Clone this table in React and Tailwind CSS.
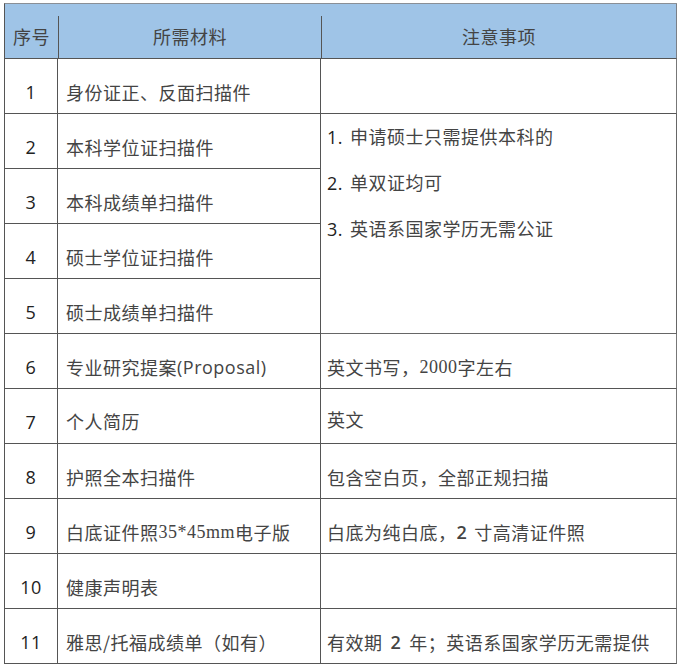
import React from 'react';

const cjk = "font-['Noto_Sans_CJK_SC',sans-serif]";
const num = "font-['Open_Sans','Noto_Sans_CJK_SC',sans-serif]";
const serif = "font-['Liberation_Serif',serif]";

// one row per material; note === undefined means the cell is covered by the merged block
const rows = [
    { no: '1', item: '身份证正、反面扫描件', note: '' },
    { no: '2', item: '本科学位证扫描件' },
    { no: '3', item: '本科成绩单扫描件' },
    { no: '4', item: '硕士学位证扫描件' },
    { no: '5', item: '硕士成绩单扫描件' },
    {
        no: '6',
        item: <>专业研究提案<span className={num}>(Proposal)</span></>,
        note: <>英文书写，<span className={serif}>2000</span>字左右</>,
    },
    { no: '7', item: '个人简历', note: '英文', itemPad: 'pt-[10px]', notePad: 'pt-[6px]' },
    { no: '8', item: '护照全本扫描件', note: '包含空白页，全部正规扫描' },
    {
        no: '9',
        item: <>白底证件照<span className={serif}>35*45mm</span>电子版</>,
        note: <>白底为纯白底，<span className={`${num} font-semibold mr-[7px]`}>2</span>寸高清证件照</>,
    },
    { no: '10', item: '健康声明表', note: '' },
    {
        no: '11',
        item: '雅思/托福成绩单（如有）',
        note: <>有效期<span className={`${num} font-semibold mx-[8px]`}>2</span>年；英语系国家学历无需提供</>,
    },
];

const merged = ['申请硕士只需提供本科的', '单双证均可', '英语系国家学历无需公证'];

export default function App() {
    return (
        <div className="bg-white w-[685px] h-[668px] pt-[3px] pl-[4px]">
            <div
                className={`grid grid-cols-[53px_263px_356px] grid-rows-[55px_repeat(11,55px)] w-[673px] border-l border-t border-l-[#555] border-t-[#8a8f96] text-[18px] tracking-[0.5px] text-[#444] ${cjk}`}
            >
                {/* header */}
                <div className="bg-[#9fc4e7] border-b border-[#555] flex justify-center items-center pt-[10px]">序号</div>
                <div className="bg-[#9fc4e7] border-b border-[#555] flex flex-col">
                    <div className="mt-[12px] flex-1 border-l border-[#555] flex justify-center items-center pb-[2px]">所需材料</div>
                </div>
                <div className="bg-[#9fc4e7] border-b border-r border-[#555] border-r-[#7a7f86] flex flex-col">
                    <div className="mt-[12px] flex-1 border-l border-[#555] flex justify-center items-center pb-[2px]">注意事项</div>
                </div>

                {rows.map((r, i) => (
                    <React.Fragment key={r.no}>
                        <div className={`border-r border-b border-[#555] flex justify-center items-center pt-[12px] text-[18px] font-medium text-[#222] ${num}`}>
                            {r.no}
                        </div>
                        <div className={`border-r border-b border-[#555] flex items-center pl-[8px] whitespace-nowrap ${r.itemPad || 'pt-[12px]'}`}>
                            {r.item}
                        </div>
                        {i === 1 && (
                            <div className="row-span-4 border-r border-b border-[#666] pl-[6px] leading-[45px] flex flex-col">
                                {merged.map((m, k) => (
                                    <div key={k} className="whitespace-nowrap">
                                        <span className={`${num} font-medium text-[#222] mr-[7px]`}>{k + 1}.</span>
                                        {m}
                                    </div>
                                ))}
                            </div>
                        )}
                        {r.note !== undefined && (
                            <div className={`border-r border-b border-[#555] border-r-[#777] flex items-center pl-[6px] whitespace-nowrap ${r.notePad || 'pt-[12px]'}`}>
                                {r.note}
                            </div>
                        )}
                    </React.Fragment>
                ))}
            </div>
        </div>
    );
}
